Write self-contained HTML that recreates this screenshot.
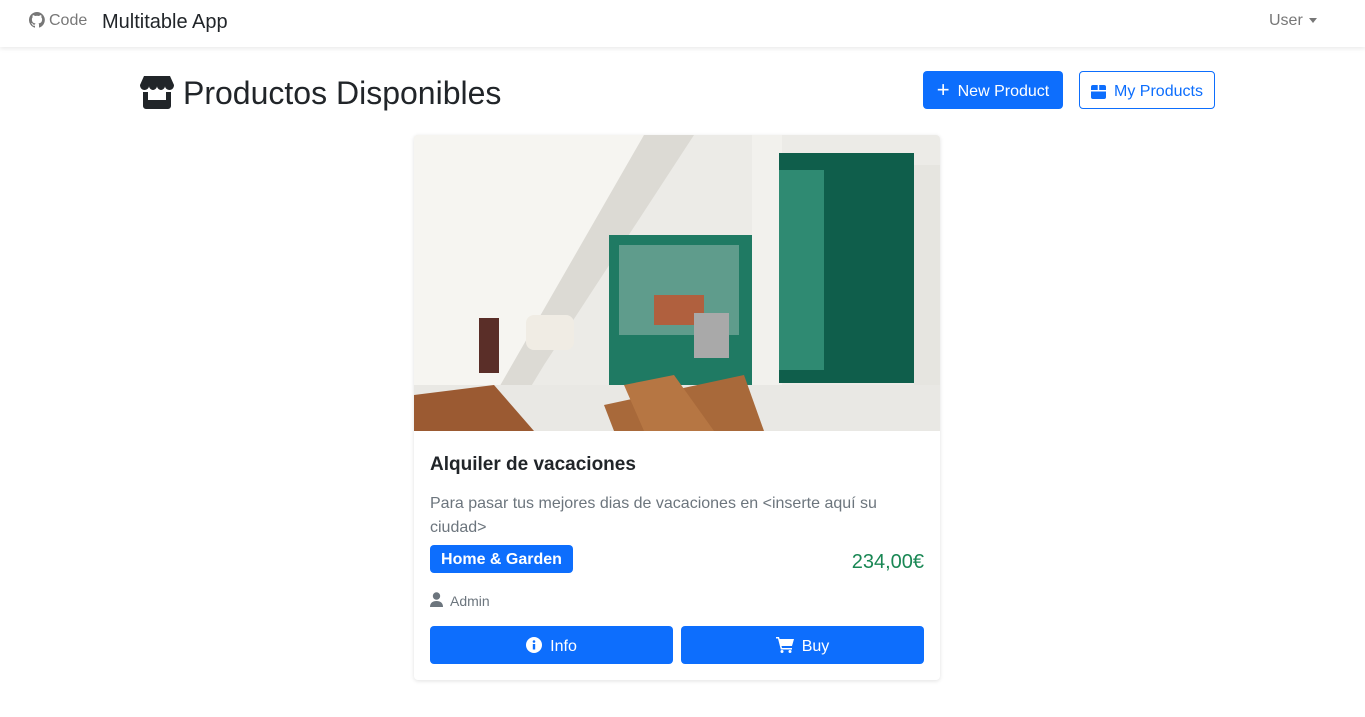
<!DOCTYPE html>
<html><head><meta charset="utf-8"><style>
*{box-sizing:border-box;margin:0;padding:0}
body{width:1365px;height:717px;background:#fff;font-family:"Liberation Sans",sans-serif;color:#212529;position:relative;overflow:hidden}
.nav{position:absolute;left:0;top:0;width:1365px;height:47px;background:#fff;box-shadow:0 2px 4px rgba(0,0,0,.08)}
.abs{position:absolute}
.btn{position:absolute;border-radius:4px;font-size:16px;display:flex;align-items:center;justify-content:center;gap:8px;padding-top:3px}
.card{position:absolute;left:414px;top:135px;width:526px;height:545px;border-radius:4px;box-shadow:0 1px 4px rgba(0,0,0,.12);overflow:hidden;background:#fff}
</style></head><body>
<div class="nav">
<svg class="abs" style="left:29px;top:12px" width="16" height="16" viewBox="0 0 16 16"><path fill="#777" d="M8 0a8 8 0 0 0-2.5 15.6c.4 0 .5-.2.5-.4v-1.5c-2.2.5-2.7-1-2.7-1-.4-.9-.9-1.2-.9-1.2-.7-.5.1-.5.1-.5.8.1 1.2.8 1.2.8.7 1.3 1.9.9 2.3.7.1-.5.3-.9.5-1.1-1.8-.2-3.6-.9-3.6-4 0-.9.3-1.6.8-2.1-.1-.2-.4-1 .1-2.1 0 0 .7-.2 2.2.8a7.4 7.4 0 0 1 4 0c1.5-1 2.2-.8 2.2-.8.4 1.1.2 1.9.1 2.1.5.6.8 1.3.8 2.1 0 3.1-1.9 3.8-3.6 4 .3.3.5.8.5 1.5v2.2c0 .2.1.5.6.4A8 8 0 0 0 8 0z"/></svg>
<div class="abs" style="left:49px;top:12px;font-size:16px;color:#777">Code</div>
<div class="abs" style="left:102px;top:11px;font-size:20px;color:#212529">Multitable App</div>
<div class="abs" style="left:1269px;top:12px;font-size:16px;color:#777">User</div>
<div class="abs" style="left:1309px;top:18px;border-left:4px solid transparent;border-right:4px solid transparent;border-top:5px solid #777"></div>
</div>
<svg class="abs" style="left:140px;top:76px" width="34" height="33" viewBox="0 0 34 33"><path fill="#212529" d="M4 0h26l4 9c0 3-2 5-4.5 5S25 12 25 10c0 2-2 4-4 4s-4-2-4-4c0 2-2 4-4 4s-4-2-4-4c0 2-2 4-4.5 4S0 12 0 9z"/><path fill="#212529" d="M3 16h5v8h18v-8h5v14a3 3 0 0 1-3 3H6a3 3 0 0 1-3-3z"/></svg>
<div class="abs" style="left:183px;top:75px;font-size:32px;color:#212529">Productos Disponibles</div>
<div class="btn" style="left:923px;top:71px;width:140px;height:38px;background:#0d6efd;color:#fff"><span style="font-size:22px;line-height:1;margin-top:-3px">+</span>New Product</div>
<div class="btn" style="left:1079px;top:71px;width:136px;height:38px;border:1px solid #0d6efd;color:#0d6efd"><svg width="15" height="14" viewBox="0 0 15 14"><rect x="0" y="0" width="15" height="14" rx="2" fill="#0d6efd"/><rect x="0" y="5" width="15" height="1.5" fill="#fff"/><rect x="6.7" y="0" width="1.5" height="6" fill="#fff"/></svg>My Products</div>
<div class="card">
<svg width="526" height="296" viewBox="0 0 526 296">
<rect width="526" height="296" fill="#ecebe7"/>
<rect x="0" y="0" width="110" height="296" fill="#f3f2ee"/>
<polygon points="0,0 230,0 90,296 0,296" fill="#f6f5f1"/>
<polygon points="230,0 280,0 130,230 90,296 60,296" fill="#dcdad4"/>
<rect x="195" y="100" width="160" height="160" fill="#1f7a63"/>
<rect x="205" y="110" width="120" height="90" fill="#5f9c8c"/>
<rect x="338" y="0" width="30" height="260" fill="#f2f1ed"/>
<rect x="365" y="18" width="135" height="230" fill="#0f5e4b"/>
<rect x="365" y="35" width="45" height="200" fill="#2f8a72"/>
<rect x="500" y="30" width="26" height="230" fill="#e6e5e0"/>
<rect x="0" y="250" width="526" height="46" fill="#e9e8e4"/>
<rect x="65" y="183" width="20" height="55" fill="#5a2e28"/>
<rect x="112" y="180" width="48" height="35" rx="8" fill="#f0ece4"/>
<rect x="240" y="160" width="50" height="30" fill="#b0603e"/>
<rect x="280" y="178" width="35" height="45" fill="#a9a9a9"/>
<polygon points="0,260 80,250 120,296 0,296" fill="#9b5a32"/>
<polygon points="190,270 330,240 350,296 200,296" fill="#a8693a"/>
<polygon points="210,250 260,240 300,296 230,296" fill="#b67643"/>
</svg>
<div class="abs" style="left:16px;top:319px;font-size:19px;font-weight:bold">Alquiler de vacaciones</div>
<div class="abs" style="left:16px;top:357px;width:470px;font-size:16px;line-height:24px;color:#6c757d">Para pasar tus mejores dias de vacaciones en &lt;inserte aquí su ciudad&gt;</div>
<div class="abs" style="left:16px;top:410px;width:143px;height:28px;background:#0d6efd;color:#fff;border-radius:4px;font-weight:bold;font-size:16px;text-align:center;line-height:30px">Home &amp; Garden</div>
<div class="abs" style="right:16px;top:416px;font-size:20px;color:#198754">234,00€</div>
<svg class="abs" style="left:16px;top:457px" width="13" height="15" viewBox="0 0 13 15"><circle cx="6.5" cy="4" r="3.7" fill="#6c757d"/><path d="M0 15c0-4 2.5-6 6.5-6s6.5 2 6.5 6z" fill="#6c757d"/></svg>
<div class="abs" style="left:36px;top:458px;font-size:14px;color:#6c757d">Admin</div>
<div class="btn" style="left:16px;top:491px;width:243px;height:38px;background:#0d6efd;color:#fff"><svg width="16" height="16" viewBox="0 0 16 16" style="margin-top:-3px"><circle cx="8" cy="8" r="8" fill="#fff"/><circle cx="8" cy="4.5" r="1.3" fill="#0d6efd"/><rect x="6.8" y="7" width="2.4" height="5.5" fill="#0d6efd"/></svg>Info</div>
<div class="btn" style="left:267px;top:491px;width:243px;height:38px;background:#0d6efd;color:#fff"><svg width="18" height="16" viewBox="0 0 18 16" style="margin-top:-3px"><path fill="#fff" d="M0 0h3l.6 2H18l-2 7H5.5l.5 2h10v1.5H4.8L2 1.5H0z"/><circle cx="6" cy="14.5" r="1.5" fill="#fff"/><circle cx="14" cy="14.5" r="1.5" fill="#fff"/></svg>Buy</div>
</div>
</body></html>
